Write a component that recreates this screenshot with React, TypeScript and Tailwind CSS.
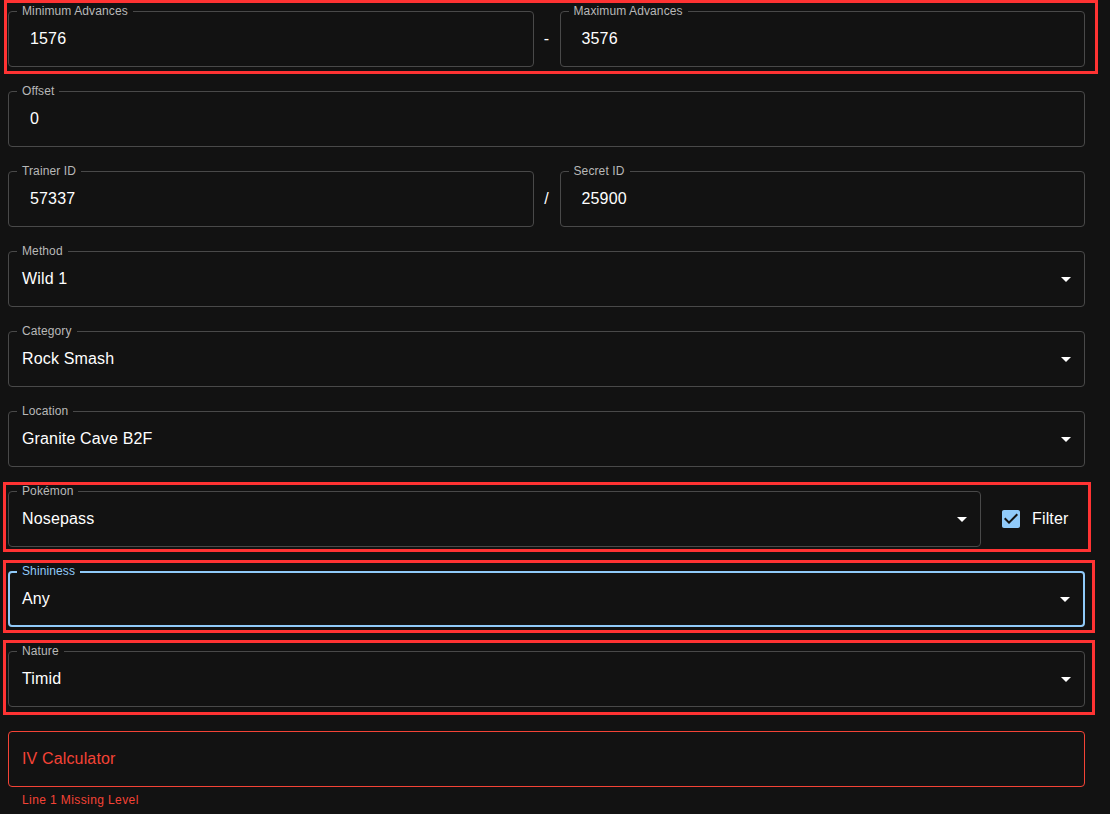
import React from "react";

const FONT = { fontFamily: '"Liberation Sans", Arial, Helvetica, sans-serif' };

function Arrow() {
  return (
    <svg
      viewBox="0 0 24 24"
      className="absolute right-[6px] top-1/2 -translate-y-1/2 w-6 h-6"
      fill="#ffffff"
    >
      <path d="M7 10l5 5 5-5z" />
    </svg>
  );
}

type FieldProps = {
  label: string;
  value: string;
  select?: boolean;
  number?: boolean;
  focused?: boolean;
  className?: string;
};

function Field({ label, value, select, number, focused, className = "" }: FieldProps) {
  if (focused) {
    return (
      <div
        className={`relative h-[56px] rounded-[4px] border-2 border-[#90caf9] flex items-center ${className}`}
      >
        <span className="absolute left-[7px] top-[-9px] px-[5px] bg-[#121212] text-[12px] leading-[14px] tracking-[0.11px] text-[#90caf9] whitespace-nowrap">
          {label}
        </span>
        <span className="pl-[12px] text-[16px] tracking-[0.15px] text-white">{value}</span>
        {select && <Arrow />}
      </div>
    );
  }
  return (
    <div
      className={`relative h-[56px] rounded-[4px] border border-[#494949] flex items-center ${className}`}
    >
      <span className="absolute left-[8px] top-[-8px] px-[5px] bg-[#121212] text-[12px] leading-[14px] tracking-[0.11px] text-[#b8b8b8] whitespace-nowrap">
        {label}
      </span>
      <span
        className={`${number ? "pl-[21px]" : "pl-[13px]"} text-[16px] tracking-[0.15px] text-white`}
      >
        {value}
      </span>
      {select && <Arrow />}
    </div>
  );
}

function Sep({ ch }: { ch: string }) {
  return (
    <div className="w-[26px] shrink-0 text-center text-[16px] text-white">{ch}</div>
  );
}

function CheckIcon() {
  return (
    <svg viewBox="0 0 24 24" className="w-6 h-6" fill="#90caf9">
      <path d="M19 3H5c-1.11 0-2 .9-2 2v14c0 1.1.89 2 2 2h14c1.11 0 2-.9 2-2V5c0-1.1-.89-2-2-2zm-9 14l-5-5 1.41-1.41L10 14.17l7.59-7.59L19 8l-9 9z" />
    </svg>
  );
}

function Overlay({ className }: { className: string }) {
  return (
    <div
      className={`absolute pointer-events-none border-[3px] border-[#ff3333] ${className}`}
    />
  );
}

export default function App() {
  return (
    <div
      className="relative w-[1110px] h-[814px] bg-[#121212] overflow-hidden"
      style={FONT}
    >
      <div className="ml-[8px] w-[1077px] pt-[11px] flex flex-col gap-[24px]">
        <div className="flex items-center">
          <Field label="Minimum Advances" value="1576" number className="flex-1" />
          <Sep ch="-" />
          <Field label="Maximum Advances" value="3576" number className="flex-1" />
        </div>
        <Field label="Offset" value="0" number />
        <div className="flex items-center">
          <Field label="Trainer ID" value="57337" number className="flex-1" />
          <Sep ch="/" />
          <Field label="Secret ID" value="25900" number className="flex-1" />
        </div>
        <Field label="Method" value="Wild 1" select />
        <Field label="Category" value="Rock Smash" select />
        <Field label="Location" value="Granite Cave B2F" select />
        <div className="flex items-center">
          <Field label="Pokémon" value="Nosepass" select className="flex-1" />
          <div className="w-[104px] shrink-0 flex items-center pl-[9px]">
            <div className="p-[9px] flex items-center">
              <CheckIcon />
            </div>
            <span className="text-[16px] tracking-[0.15px] text-white">Filter</span>
          </div>
        </div>
        <Field label="Shininess" value="Any" select focused />
        <Field label="Nature" value="Timid" select />
        <div className="flex flex-col">
          <div className="h-[56px] rounded-[4px] border border-[#f44336] flex items-center">
            <span className="pl-[13px] text-[16px] tracking-[0.15px] text-[#f44336]">
              IV Calculator
            </span>
          </div>
          <p className="mt-[3px] ml-[14px] text-[12px] leading-[20px] tracking-[0.4px] text-[#f44336]">
            Line 1 Missing Level
          </p>
        </div>
      </div>

      <Overlay className="left-[4px] top-[0px] w-[1094px] h-[74px]" />
      <Overlay className="left-[3px] top-[482px] w-[1088px] h-[70px]" />
      <Overlay className="left-[3px] top-[560px] w-[1092px] h-[73px]" />
      <Overlay className="left-[3px] top-[640px] w-[1092px] h-[75px]" />
    </div>
  );
}
